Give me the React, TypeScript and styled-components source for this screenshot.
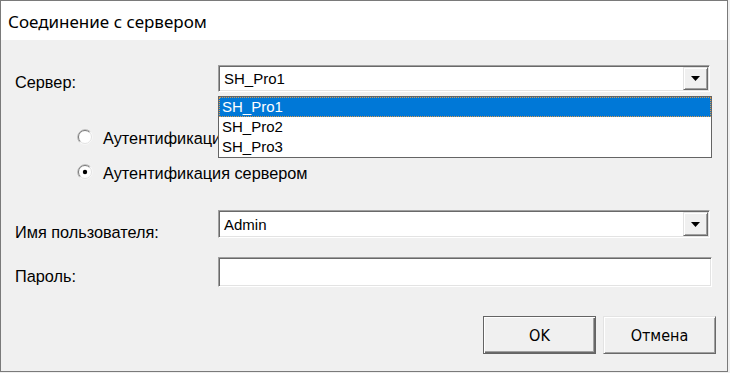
import { FC } from 'react'
import styled, { createGlobalStyle, css } from 'styled-components'

const GlobalStyle = createGlobalStyle`
	html, body {
		margin: 0;
		padding: 0;
		background: #f0f0f0;
	}
	body {
		font-family: 'Liberation Sans', Arial, sans-serif;
		font-size: 15px;
		color: #000;
	}
`

const servers = ['SH_Pro1', 'SH_Pro2', 'SH_Pro3']

const RadioMark: FC<{ checked?: boolean }> = ({ checked }) => (
	<RadioIcon width='16' height='16' viewBox='0 0 16 16'>
		<circle cx='8' cy='8' r='7' fill='#fff' />
		<path d='M2.7 13.3 A7.5 7.5 0 0 1 13.3 2.7' fill='none' stroke='#b4b4b4' strokeWidth='1' />
		<path d='M3.4 12.6 A6.5 6.5 0 0 1 12.6 3.4' fill='none' stroke='#7a7a7a' strokeWidth='1' />
		<path d='M13.3 2.7 A7.5 7.5 0 0 1 2.7 13.3' fill='none' stroke='#fafafa' strokeWidth='1' />
		<path d='M12.6 3.4 A6.5 6.5 0 0 1 3.4 12.6' fill='none' stroke='#e3e3e3' strokeWidth='1' />
		{checked && <circle cx='8' cy='8' r='2.2' fill='#000' />}
	</RadioIcon>
)

const ArrowDown: FC = () => (
	<svg width='9' height='5' viewBox='0 0 9 5'>
		<path d='M0 0 H9 L4.5 5 Z' fill='#000' />
	</svg>
)

const App: FC = () => {
	return (
		<>
			<GlobalStyle />
			<Window>
				<TitleBar>Соединение с сервером</TitleBar>
				<Body>
					<FormRow height={27}>
						<Label offset={9}>Сервер:</Label>
						<Combo>
							<ComboText>SH_Pro1</ComboText>
							<DropButton>
								<ArrowDown />
							</DropButton>
							{/* open list lies over the first radio caption */}
							<DropList>
								{servers.map((server, index) => (
									<DropItem key={server} selected={index === 0}>
										{server}
									</DropItem>
								))}
							</DropList>
						</Combo>
					</FormRow>

					<RadioGroup>
						<RadioRow>
							<RadioMark />
							<RadioText>Аутентификация Windows</RadioText>
						</RadioRow>
						<RadioRow>
							<RadioMark checked />
							<RadioText>Аутентификация сервером</RadioText>
						</RadioRow>
					</RadioGroup>

					<FormRow height={28} gap={28}>
						<Label offset={14}>Имя пользователя:</Label>
						<Combo>
							<ComboText>Admin</ComboText>
							<DropButton>
								<ArrowDown />
							</DropButton>
						</Combo>
					</FormRow>

					<FormRow height={30} gap={19}>
						<Label offset={11}>Пароль:</Label>
						<TextField />
					</FormRow>

					<Actions>
						<Button isDefault>OK</Button>
						<Button>Отмена</Button>
					</Actions>
				</Body>
			</Window>
		</>
	)
}

const sunken = css`
	border-top: 1px solid #a0a0a0;
	border-left: 1px solid #a0a0a0;
	border-bottom: 1px solid #fff;
	border-right: 1px solid #fff;
	box-shadow: inset 1px 1px 0 #696969, inset -1px -1px 0 #e3e3e3;
`

const raised = css`
	border-top: 1px solid #e3e3e3;
	border-left: 1px solid #e3e3e3;
	border-bottom: 1px solid #696969;
	border-right: 1px solid #696969;
	box-shadow: inset 1px 1px 0 #fff, inset -1px -1px 0 #a0a0a0;
`

const Window = styled.div`
	width: 728px;
	height: 372px;
	box-sizing: border-box;
	border: 1px solid #7a7a7a;
	background: #f0f0f0;
	display: flex;
	flex-direction: column;
`

const TitleBar = styled.div`
	height: 39px;
	flex-shrink: 0;
	background: #fff;
	display: flex;
	align-items: center;
	padding: 2px 0 0 7px;
	box-sizing: border-box;
	font-family: 'Noto Sans', 'Open Sans', sans-serif;
	font-size: 17px;
	color: #000;
`

const Body = styled.div`
	padding: 25px 11px 0 14px;
	display: flex;
	flex-direction: column;
`

const FormRow = styled.div<{ height: number; gap?: number }>`
	display: flex;
	align-items: flex-start;
	height: ${(props) => props.height}px;
	margin-top: ${(props) => props.gap ?? 0}px;
`

const Label = styled.div<{ offset: number }>`
	width: 203px;
	flex-shrink: 0;
	padding-top: ${(props) => props.offset}px;
	font-size: 16.3px;
	line-height: 1;
`

const Combo = styled.div`
	position: relative;
	width: 492px;
	height: 100%;
	box-sizing: border-box;
	background: #fff;
	display: flex;
	align-items: center;
	${sunken};
`

const ComboText = styled.div`
	flex: 1;
	padding-left: 5px;
`

const DropButton = styled.div`
	width: 25px;
	align-self: stretch;
	margin: 1px 1px 1px 0;
	box-sizing: border-box;
	background: #f0f0f0;
	display: flex;
	align-items: center;
	justify-content: center;
	${raised};
`

const DropList = styled.div`
	position: absolute;
	top: 30px;
	left: -1px;
	width: 494px;
	box-sizing: border-box;
	border: 1px solid #646464;
	background: #fff;
	z-index: 2;
`

const DropItem = styled.div<{ selected?: boolean }>`
	height: 20px;
	line-height: 20px;
	padding-left: 3px;
	${(props) =>
		props.selected &&
		css`
			background: #0078d7;
			color: #fff;
			outline: 1px dotted #d99a4e;
			outline-offset: -1px;
		`}
`

const RadioGroup = styled.div`
	display: flex;
	flex-direction: column;
	gap: 15px;
	margin-top: 35px;
	padding-left: 62px;
`

const RadioRow = styled.div`
	display: flex;
	align-items: center;
	gap: 10px;
	height: 20px;
`

const RadioIcon = styled.svg`
	flex-shrink: 0;
`

const RadioText = styled.span`
	font-size: 16.3px;
	white-space: nowrap;
	padding-top: 2px;
`

const TextField = styled.div`
	width: 494px;
	height: 100%;
	box-sizing: border-box;
	background: #fff;
	${sunken};
`

const Actions = styled.div`
	display: flex;
	justify-content: flex-end;
	gap: 7px;
	margin-top: 29px;
`

const Button = styled.div<{ isDefault?: boolean }>`
	width: 113px;
	height: 38px;
	box-sizing: border-box;
	background: #f0f0f0;
	display: flex;
	align-items: center;
	justify-content: center;
	font-family: 'DejaVu Sans Condensed', 'DejaVu Sans', sans-serif;
	font-stretch: condensed;
	font-size: 16px;
	${(props) =>
		props.isDefault
			? css`
					border: 1px solid #646464;
					box-shadow: inset 1px 1px 0 #fff, inset -1px -1px 0 #696969, inset -2px -2px 0 #a0a0a0;
			  `
			: raised};
`

export default App
